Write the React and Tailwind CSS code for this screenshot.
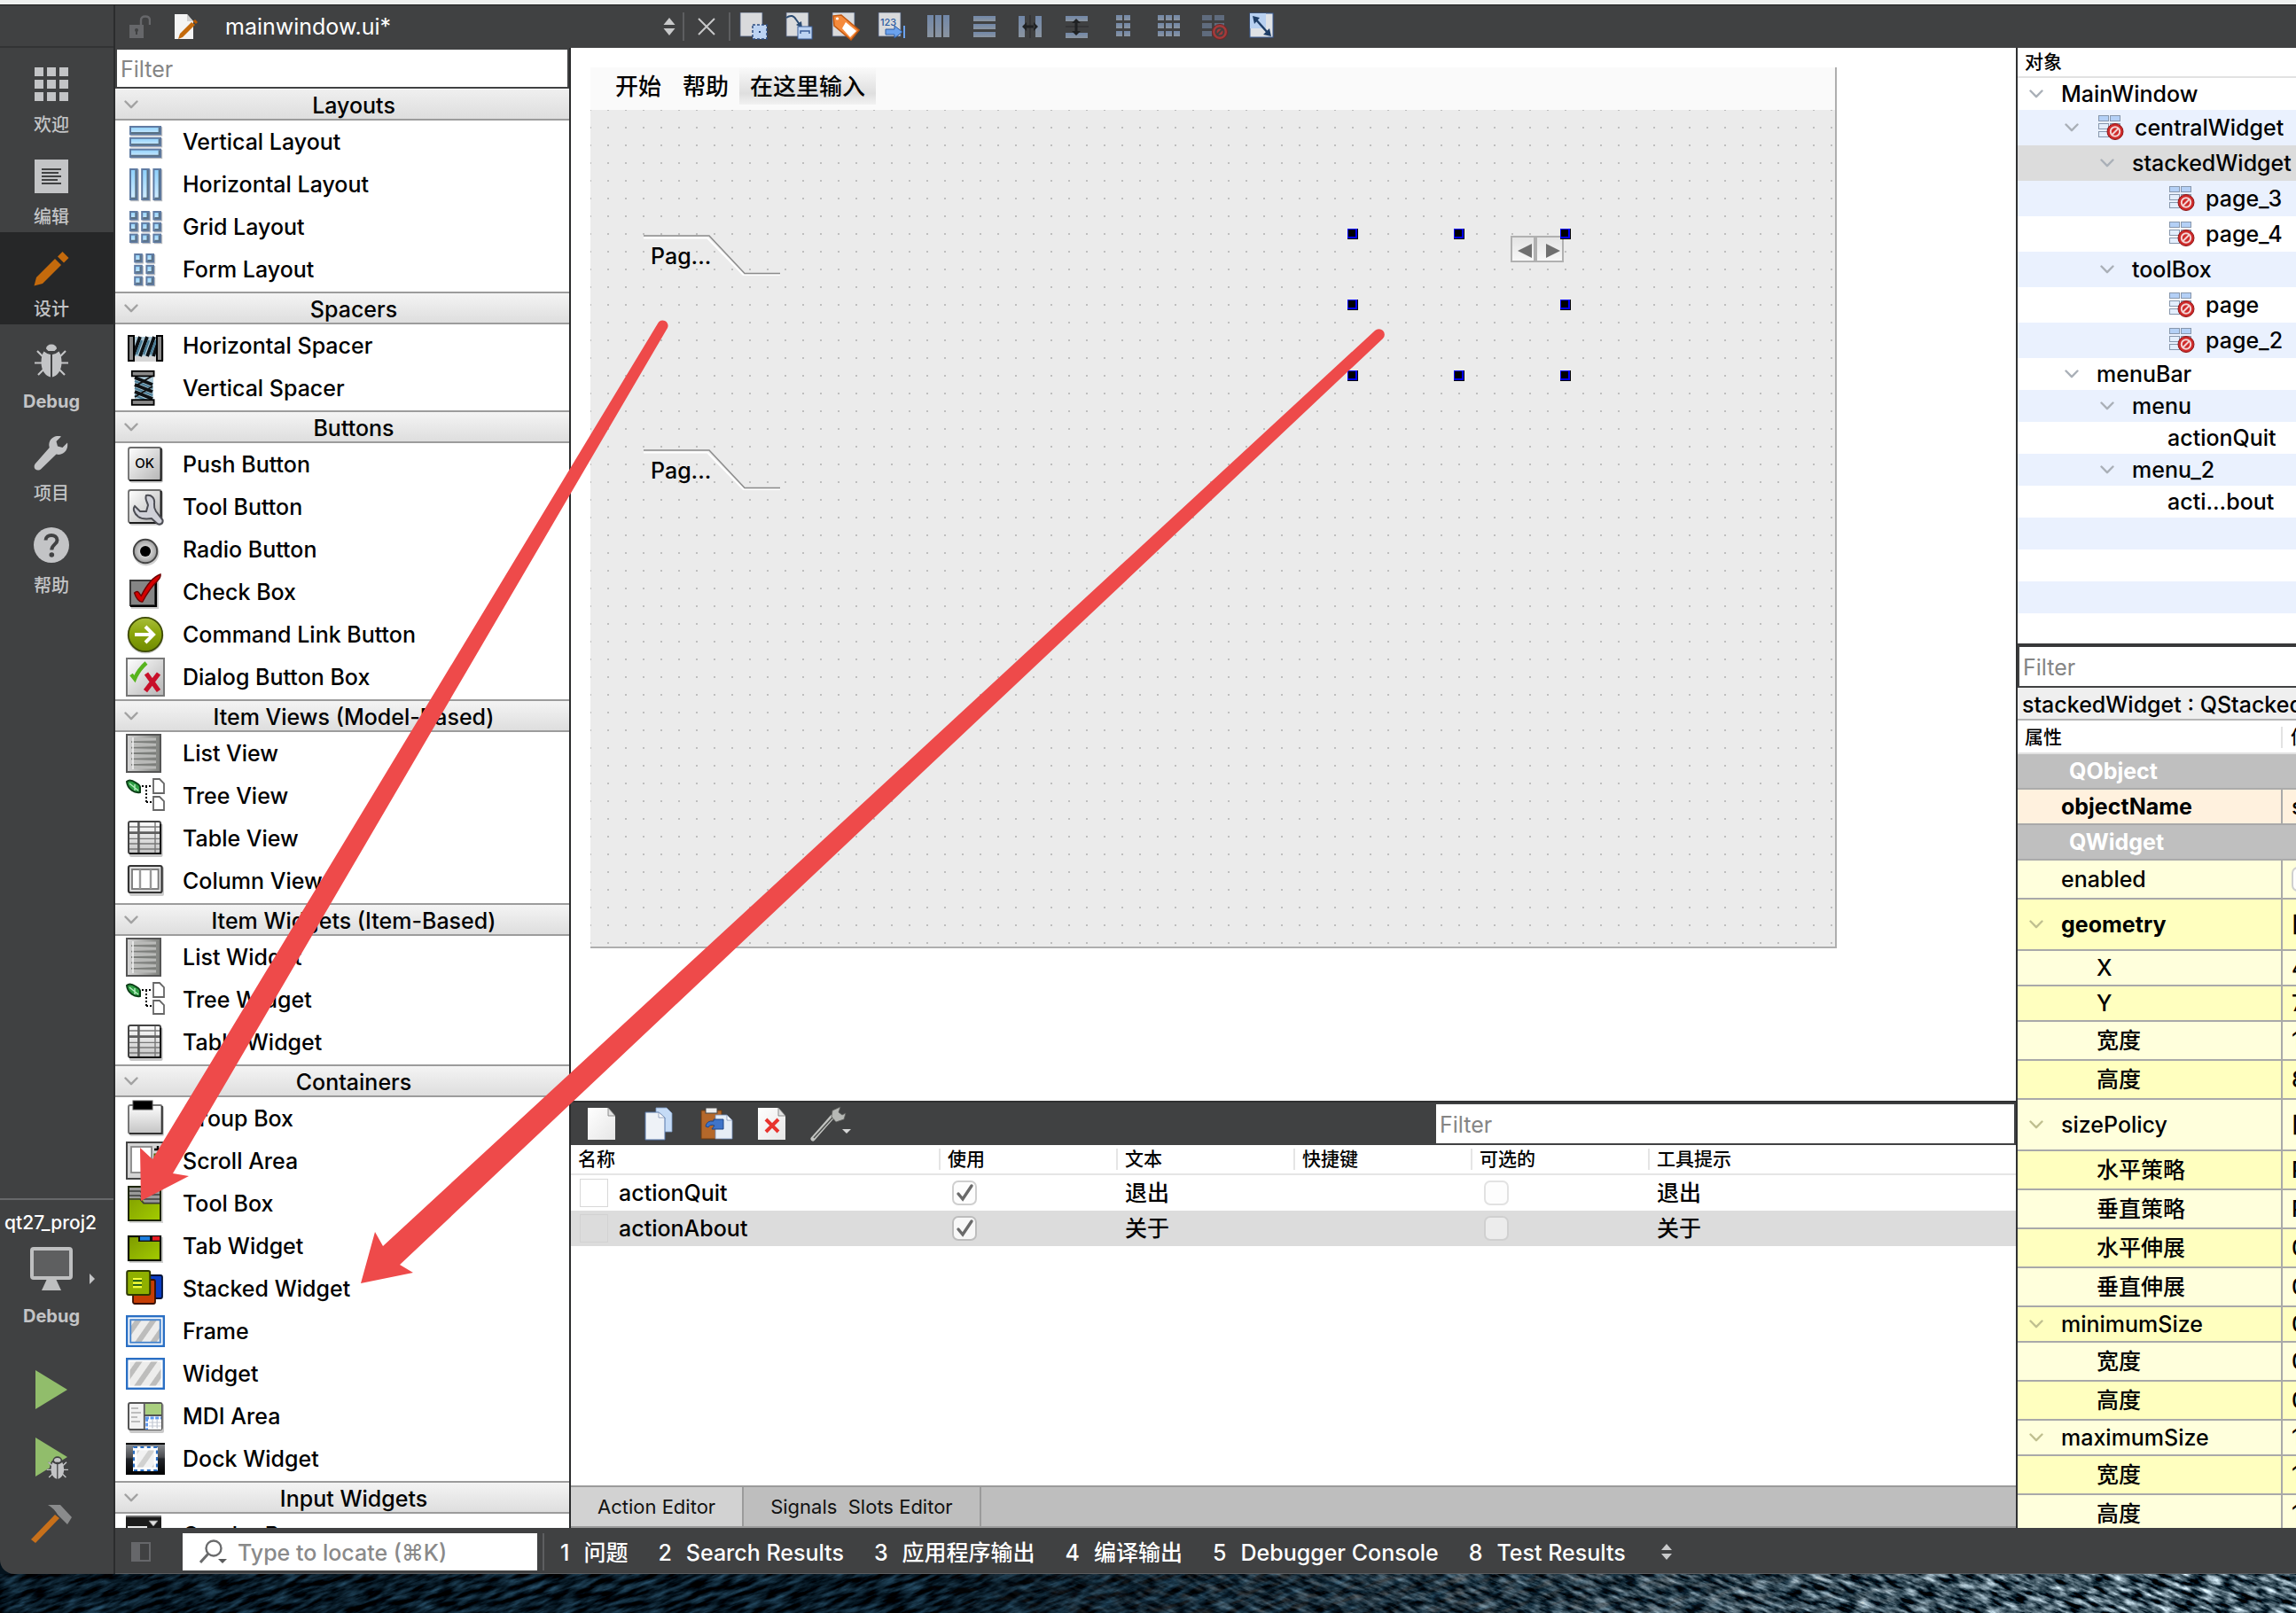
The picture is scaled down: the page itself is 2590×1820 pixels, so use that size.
import React from "react";

/* ---------- shared gradients ---------- */
function Defs() {
  return (
    <svg width="0" height="0" className="absolute" aria-hidden="true">
      <defs>
        <linearGradient id="blueBar" x1="0" y1="0" x2="0" y2="1">
          <stop offset="0" stopColor="#8dd0fb" />
          <stop offset="1" stopColor="#d3edff" />
        </linearGradient>
        <linearGradient id="greyBtn" x1="0" y1="0" x2="1" y2="1">
          <stop offset="0" stopColor="#ffffff" />
          <stop offset="1" stopColor="#b4b4b4" />
        </linearGradient>
        <linearGradient id="greyDown" x1="0" y1="0" x2="0" y2="1">
          <stop offset="0" stopColor="#fdfdfd" />
          <stop offset="1" stopColor="#c4c4c4" />
        </linearGradient>
        <linearGradient id="listGrey" x1="0" y1="0" x2="1" y2="0">
          <stop offset="0" stopColor="#d8d8d8" />
          <stop offset="1" stopColor="#7d7f7b" />
        </linearGradient>
        <linearGradient id="olive" x1="0" y1="0" x2="1" y2="1">
          <stop offset="0" stopColor="#7d9a00" />
          <stop offset="1" stopColor="#a3cc00" />
        </linearGradient>
        <linearGradient id="limeBall" x1="0" y1="0" x2="0" y2="1">
          <stop offset="0" stopColor="#a8bd3a" />
          <stop offset="0.45" stopColor="#8ba60c" />
          <stop offset="1" stopColor="#6f8a00" />
        </linearGradient>
        <linearGradient id="page" x1="0" y1="0" x2="1" y2="1">
          <stop offset="0" stopColor="#ffffff" />
          <stop offset="1" stopColor="#e6e6e6" />
        </linearGradient>
        <linearGradient id="slate" x1="0" y1="0" x2="0" y2="1">
          <stop offset="0" stopColor="#7187a8" />
          <stop offset="1" stopColor="#8b95a1" />
        </linearGradient>
        <linearGradient id="dock" x1="0" y1="0" x2="0" y2="1">
          <stop offset="0" stopColor="#8f9296" />
          <stop offset="0.45" stopColor="#4a4c50" />
          <stop offset="0.5" stopColor="#23262b" />
          <stop offset="1" stopColor="#000000" />
        </linearGradient>
        <radialGradient id="ball">
          <stop offset="0" stopColor="#ffffff" />
          <stop offset="1" stopColor="#9d9d9d" />
        </radialGradient>
        <pattern id="hatch" width="7" height="7" patternUnits="userSpaceOnUse" patternTransform="rotate(35)">
          <rect width="7" height="7" fill="#ededec" />
          <rect width="3" height="7" fill="#bdbdbc" />
        </pattern>
      </defs>
    </svg>
  );
}

const Ico = ({ children }) => (
  <svg viewBox="0 0 22 22" className="size-[44px] shrink-0" aria-hidden="true">
    {children}
  </svg>
);

function Bars({ cells }) {
  return (
    <Ico>
      {cells.map(([x, y, w, h], i) => (
        <g key={i}>
          <rect x={x + 0.6} y={y + 0.6} width={w} height={h} fill="#b9bcc0" />
          <rect x={x + 0.5} y={y + 0.5} width={w - 1} height={h - 1} fill="url(#blueBar)" stroke="#5f7ba3" strokeWidth="1" />
          <path d={`M${x + 1} ${y + h - 1.2}H${x + w - 1.2}V${y + 1}`} fill="none" stroke="#5a7184" strokeWidth="0.9" />
        </g>
      ))}
    </Ico>
  );
}

const gridCells = (xs, ys, w, h) => ys.flatMap((y) => xs.map((x) => [x, y, w, h]));

const IconVLayout = () => <Bars cells={gridCells([2], [2, 8.4, 14.8], 18, 5.2)} />;
const IconHLayout = () => <Bars cells={gridCells([2, 8.6, 15.2], [2], 4.8, 18)} />;
const IconGrid = () => <Bars cells={gridCells([2, 8.6, 15.2], [2, 8.4, 14.8], 4.8, 5.2)} />;
const IconForm = () => <Bars cells={gridCells([4.6, 11.2], [2, 8.4, 14.8], 4.8, 5.2)} />;

const IconHSpacer = () => (
  <Ico>
    <rect x="2" y="7" width="19.500" height="13" rx="1" fill="#d6d6d6" />
    <rect x="3" y="6" width="16" height="11" fill="#aecbd9" />
    <path d="M4 17L8 6M8 17L12 6M12 17L16 6M15.500 17L18.500 8" stroke="#0d1114" strokeWidth="1.900" />
    <path d="M6 16L9 8M10 16L13 8M14 16L17 8" stroke="#4a7c95" strokeWidth="1.200" />
    <rect x="1.500" y="5.500" width="3" height="14" fill="#8a8a8a" stroke="#000" strokeWidth="1" />
    <rect x="17.500" y="5.500" width="3" height="14" fill="#8a8a8a" stroke="#000" strokeWidth="1" />
  </Ico>
);
const IconVSpacer = () => (
  <Ico>
    <rect x="5" y="3" width="10.500" height="16" fill="#aecbd9" />
    <path d="M5 5L15 9M5 9L15 13M5 13L15 17" stroke="#0d1114" strokeWidth="1.900" />
    <path d="M5 7L15 11M5 11L15 15M5 15L14 19" stroke="#4a7c95" strokeWidth="1.200" />
    <path d="M15 4L5 10M15 10L5 16" stroke="#111" strokeWidth="0.9" />
    <rect x="3.4" y="1.4" width="12.4" height="2.8" fill="#8a8a8a" stroke="#000" strokeWidth="0.9" />
    <rect x="3.4" y="17.6" width="12.4" height="2.8" fill="#8a8a8a" stroke="#000" strokeWidth="0.9" />
  </Ico>
);
const BtnBase = () => (
  <>
    <rect x="2" y="2" width="19" height="19.4" rx="1.5" fill="#c9c9c9" />
    <rect x="1.5" y="1.5" width="18.4" height="18.4" rx="1.2" fill="url(#greyBtn)" stroke="#6d6d6d" strokeWidth="0.9" />
    <path d="M2 20H19.8V2" fill="none" stroke="#1c1c1c" strokeWidth="1" />
  </>
);
const IconPush = () => (
  <Ico>
    <BtnBase />
    <text x="10.6" y="13" textAnchor="middle" fontSize="7.5" fontFamily="Inter, sans-serif" fontWeight="500" fill="#000">
      OK
    </text>
  </Ico>
);
const IconToolBtn = () => (
  <Ico>
    <BtnBase />
    <path
      d="M11.500 4.500C14.500 4 16.500 6 16 9.500C15.800 11 16 12 17 13.500L20.800 18.500C21 20.500 19 21.500 17.500 20.200L14.500 17.500C12.500 17.800 9 18 7 16.500C4.500 14.500 3.800 12 5 10.500L8 13.500L11.500 13.500L12.500 10C12 8 10.500 6.500 11.500 4.500Z"
      fill="#cfd0d8"
      stroke="#4c4d54"
      strokeWidth="1"
    />
  </Ico>
);
const IconRadio = () => (
  <Ico>
    <circle cx="11.4" cy="12.8" r="7.4" fill="#d0d0d0" />
    <circle cx="11" cy="12" r="6.6" fill="url(#ball)" stroke="#444" strokeWidth="1" />
    <circle cx="11" cy="12" r="3" fill="#000" />
  </Ico>
);
const IconCheck = () => (
  <Ico>
    <rect x="3" y="5" width="15.500" height="15.500" fill="#cfcfcf" />
    <rect x="2.500" y="4.500" width="14" height="14" fill="#858585" stroke="#3a3a3a" strokeWidth="1" />
    <path d="M2.500 19H17V5" fill="none" stroke="#000" strokeWidth="1.100" />
    <path d="M4.800 11.500C7 9.500 7.500 12 8.600 13.200C11.500 7.500 15 2.500 19.500 1C19.800 2.500 19 3.500 18 4.500C14 8.500 11.500 12.500 9.400 16.500C7.500 17 5.500 14 4.800 11.500Z" fill="#d40000" stroke="#6e0000" strokeWidth="0.700" />
  </Ico>
);
const IconCommand = () => (
  <Ico>
    <circle cx="11" cy="11.600" r="10.200" fill="#cccccc" />
    <circle cx="11" cy="11" r="9.600" fill="url(#limeBall)" stroke="#3d4a05" strokeWidth="0.900" />
    <path d="M5 11H15M11 6.500L15.500 11L11 15.500" fill="none" stroke="#fff" strokeWidth="2" />
  </Ico>
);
const IconDialog = () => (
  <Ico>
    <rect x="0.500" y="0.500" width="21" height="21" fill="url(#greyBtn)" stroke="#777" strokeWidth="1" />
    <path d="M3 9.500L5 12Q7 7 11.500 3" fill="none" stroke="#57b41d" strokeWidth="2.200" />
    <path d="M11.500 9L18.500 18.800M18.500 9L11 18.800" stroke="#c8102a" strokeWidth="2.600" />
  </Ico>
);
const IconList = () => (
  <Ico>
    <rect x="0.500" y="0.500" width="19" height="21" fill="url(#listGrey)" stroke="#555" strokeWidth="1" />
    <path d="M4.500 3H17M4.500 6.200H17M4.500 9.400H17M4.500 12.600H17M4.500 15.800H17M4.500 19H17" stroke="#b9bab8" strokeWidth="1.400" />
    <path d="M3 4.600H17M3 7.800H17M3 11H17M3 14.200H17M3 17.400H17" stroke="#7b7d7a" strokeWidth="0.900" />
    <path d="M4 2V20" stroke="#efefef" strokeWidth="0.800" />
  </Ico>
);
const IconTree = () => (
  <Ico>
    <path d="M0.500 3C2 1.500 4 2.500 5.500 3.500C7 4.500 8 5 8 6V9C5 9.500 1 7.500 0.500 3Z" fill="#2f9e44" stroke="#0c3d17" strokeWidth="1" />
    <path d="M2 4L7 8M5 4.500V8" stroke="#b6ecc0" strokeWidth="0.700" />
    <path d="M9 5.500H15M11.500 5.500V14.500M11.500 14.500H15" fill="none" stroke="#000" strokeWidth="1" strokeDasharray="1 1" />
    <path d="M15.500 1.500H19L21.500 4V9.500H15.500Z" fill="#fff" stroke="#666" strokeWidth="0.900" />
    <path d="M15.500 11.500H19L21.500 14V19H15.500Z" fill="#fff" stroke="#666" strokeWidth="0.900" />
  </Ico>
);
const IconTable = () => (
  <Ico>
    <rect x="2" y="2.500" width="18.800" height="19" rx="1" fill="#c6c6c6" />
    <rect x="1.500" y="1.500" width="18" height="18" rx="1" fill="url(#greyDown)" stroke="#444" strokeWidth="1" />
    <path d="M2 4.500H19M2 11.200H19M2 14H19M2 17H19M16.500 2V19" stroke="#777" strokeWidth="0.700" />
    <path d="M2 7.800H19M7.200 2V19" stroke="#5e5e5e" strokeWidth="1.300" />
    <path d="M2 19.600H19.600V3" fill="none" stroke="#111" strokeWidth="0.900" />
  </Ico>
);
const IconColumn = () => (
  <Ico>
    <rect x="2" y="3" width="19.500" height="16.500" rx="1" fill="#cdcdcd" />
    <rect x="1.500" y="2.500" width="18.800" height="15" rx="1" fill="#dcdcdc" stroke="#333" strokeWidth="1.100" />
    <rect x="3.500" y="4.500" width="14.800" height="11" fill="#fff" stroke="#777" strokeWidth="0.900" />
    <path d="M8 4.500V15.500M14 4.500V15.500" stroke="#999" strokeWidth="1.200" />
  </Ico>
);
const IconGroup = () => (
  <Ico>
    <rect x="2" y="4" width="19.500" height="17" rx="1" fill="#cfcfcf" />
    <rect x="1.500" y="3.500" width="18.800" height="16" rx="1" fill="url(#greyDown)" stroke="#777" strokeWidth="1" />
    <path d="M2 19.500H20.400V4" fill="none" stroke="#333" strokeWidth="0.900" />
    <rect x="4" y="1" width="11" height="5" fill="#000" stroke="#555" strokeWidth="0.500" />
  </Ico>
);
const IconScroll = () => (
  <Ico>
    <rect x="0.500" y="0.500" width="20.500" height="20.500" fill="#d4d4d4" stroke="#444" strokeWidth="1" />
    <rect x="3" y="3" width="11.500" height="14.500" fill="#fff" stroke="#888" strokeWidth="0.900" />
    <rect x="16" y="7" width="3.500" height="6" fill="#95b900" stroke="#3c4a00" strokeWidth="0.500" />
    <path d="M16 4.500H20M18 2.500V4.500" stroke="#000" strokeWidth="1.200" />
  </Ico>
);
const IconToolBox = () => (
  <Ico>
    <rect x="2" y="2" width="19" height="20" fill="#d5d5d5" />
    <rect x="1.500" y="1.500" width="18" height="19" fill="url(#olive)" stroke="#1e2600" strokeWidth="1" />
    <path d="M2 2H19V10.500H10.500L9 8H2Z" fill="#9a9a9a" />
    <path d="M2 4H8L10 6H19M2 6.500H8L10 8.500H19M2 8.500H8L10 10.800H19" fill="none" stroke="#3c3c3c" strokeWidth="0.800" />
  </Ico>
);
const IconTab = () => (
  <Ico>
    <rect x="2" y="6" width="19" height="14.500" fill="#d0d0d0" />
    <rect x="1.500" y="5.500" width="18" height="13.500" fill="url(#olive)" stroke="#0f1400" strokeWidth="1.100" />
    <path d="M7 5V8.500H20V5Z" fill="#111" />
    <rect x="8" y="5.600" width="5.500" height="2.200" fill="#1c7fe0" />
    <rect x="15" y="5.600" width="4" height="2.200" fill="#ea1c24" />
  </Ico>
);
const IconStacked = () => (
  <Ico>
    <rect x="11" y="3.500" width="9.500" height="13" rx="1" fill="#0a3cc4" stroke="#041236" strokeWidth="0.900" />
    <rect x="4" y="6" width="12.500" height="13.500" rx="1" fill="#c63d05" stroke="#3a0f00" strokeWidth="0.900" />
    <rect x="0.600" y="1" width="13" height="13.500" rx="1" fill="#8fb000" stroke="#2e3900" strokeWidth="1" />
    <path d="M4 5.500H9M4 7.800H9M4 10.100H9" stroke="#f4ff3a" strokeWidth="1.100" />
    <path d="M4 6.600H9M4 8.900H9" stroke="#1c5a1c" strokeWidth="0.900" />
  </Ico>
);
const IconFrame = () => (
  <Ico>
    <rect x="0.600" y="2.600" width="20.800" height="16.800" fill="#fff" stroke="#2a6fc4" strokeWidth="1.200" />
    <rect x="2.600" y="4.600" width="16.800" height="12.800" fill="url(#hatch)" stroke="#4b87ce" strokeWidth="1" />
  </Ico>
);
const IconWidget = () => (
  <Ico>
    <rect x="0.600" y="2.600" width="20.800" height="16.800" fill="#fff" stroke="#2a6fc4" strokeWidth="1.200" />
    <rect x="2.200" y="4.200" width="17.600" height="13.600" fill="url(#hatch)" />
  </Ico>
);
const IconMdi = () => (
  <Ico>
    <rect x="2" y="4" width="19.500" height="16.500" rx="1" fill="#c9c9c9" />
    <rect x="1.500" y="3.500" width="18.800" height="15" rx="1" fill="#f2f2f2" stroke="#555" strokeWidth="1" />
    <path d="M3 6.500H7M3 9H8.500M3 11.500H6.500M3 14H8" stroke="#bdbdbd" strokeWidth="0.900" />
    <rect x="11" y="4" width="9" height="6" fill="#a9cf7f" />
    <rect x="11" y="11" width="9" height="7.500" fill="#fff" />
    <path d="M11 12H20M11.800 12V18.500" stroke="#5d97ee" strokeWidth="1.400" strokeDasharray="2 0.800" />
    <path d="M13 14.500H20M13 16.500H20M15 12.500V18M17.600 12.500V18" stroke="#c2c8d2" strokeWidth="0.600" />
    <path d="M10.400 4V18.500M10.400 10.500H20" stroke="#555" strokeWidth="0.900" />
  </Ico>
);
const IconDock = () => (
  <Ico>
    <rect x="0" y="2" width="22" height="18" fill="url(#dock)" />
    <path d="M0 2.500H22" stroke="#000" strokeWidth="1" />
    <rect x="4" y="4" width="14" height="14" fill="#fff" />
    <rect x="6.200" y="6.200" width="9.600" height="9.600" fill="url(#hatch)" opacity="0.700" />
    <rect x="4.500" y="4.500" width="13" height="13" fill="none" stroke="#2a6fc4" strokeWidth="1.100" strokeDasharray="2 1.700" />
  </Ico>
);
const IconCombo = () => (
  <Ico>
    <rect x="0" y="0" width="20" height="20" fill="#1b1b1b" />
    <path d="M0 0.500H20" stroke="#6b6b6b" />
    <rect x="1" y="6" width="11" height="8" fill="#e9e9e9" />
    <path d="M13 3H18L15.500 6Z" fill="#e0e0e0" stroke="#888" strokeWidth="0.400" />
  </Ico>
);

const GROUPS = [
  ["Layouts", [["Vertical Layout", IconVLayout], ["Horizontal Layout", IconHLayout], ["Grid Layout", IconGrid], ["Form Layout", IconForm]]],
  ["Spacers", [["Horizontal Spacer", IconHSpacer], ["Vertical Spacer", IconVSpacer]]],
  ["Buttons", [["Push Button", IconPush], ["Tool Button", IconToolBtn], ["Radio Button", IconRadio], ["Check Box", IconCheck], ["Command Link Button", IconCommand], ["Dialog Button Box", IconDialog]]],
  ["Item Views (Model-Based)", [["List View", IconList], ["Tree View", IconTree], ["Table View", IconTable], ["Column View", IconColumn]]],
  ["Item Widgets (Item-Based)", [["List Widget", IconList], ["Tree Widget", IconTree], ["Table Widget", IconTable]]],
  ["Containers", [["Group Box", IconGroup], ["Scroll Area", IconScroll], ["Tool Box", IconToolBox], ["Tab Widget", IconTab], ["Stacked Widget", IconStacked], ["Frame", IconFrame], ["Widget", IconWidget], ["MDI Area", IconMdi], ["Dock Widget", IconDock]]],
  ["Input Widgets", [["Combo Box", IconCombo]]],
];

const Chevron = ({ className }) => (
  <svg viewBox="0 0 16 10" className={className} aria-hidden="true">
    <path d="M1.500 1.500L8 8.200L14.500 1.500" fill="none" stroke="currentColor" strokeWidth="2.400" strokeLinecap="round" strokeLinejoin="round" />
  </svg>
);

/* ---------- left mode rail ---------- */
const BUG = (
  <g>
    <path d="M14 6.500a6 5 0 0 1 12 0l-2.500 2.500h-7z" />
    <path d="M11.500 9.500q3.500 3 7.500 3.500V38.500C13.500 37.500 8.500 31 8.500 22Q8.500 14 11.500 9.500Z" />
    <path d="M28.500 9.500q-3.500 3-7.500 3.500V38.500C26.500 37.500 31.500 31 31.500 22Q31.500 14 28.500 9.500Z" />
    <path d="M10 15L4 9M30 15l6-6M9.500 22.500H1M30.500 22.500H39M11 30L5 36M29 30l6 6" stroke="currentColor" strokeWidth="2.200" fill="none" />
  </g>
);
const RailIcon = ({ children }) => (
  <svg viewBox="0 0 40 40" className="size-[40px]" fill="currentColor" aria-hidden="true">
    {children}
  </svg>
);
const MODES = [
  ["欢迎", <>{gridCells([1, 15, 29], [1, 15, 29], 10, 10).map(([x, y, w, h], i) => <rect key={i} x={x} y={y} width={w} height={h} />)}</>],
  ["编辑", <><rect x="1" y="1" width="38" height="38" /><path d="M9 12H31M9 16H28M9 20H31M9 24H27M9 28H31" stroke="#404142" strokeWidth="2" /></>],
  ["设计", <g fill="#c46a0c"><path d="M0.500 39.500L3 30L24 9L31 16L10 37Z" /><path d="M27 6.500L32.500 1L39.500 8L34 13.500Z" /></g>],
  ["Debug", BUG],
  ["项目", <path d="M38 8.500l-5.500 5.500-5.500-1.500-1.500-5.500L31 1.500C26 0 20.500 2 18.300 6.500c-1.200 2.500-1.300 5-.5 7.500L2 32c-2 2.500-1.500 5 0 6.500s4.500 1.500 6.500-.5L25.500 21.500c7 2 14-4 12.500-13z" />],
  ["帮助", <><circle cx="20" cy="20" r="20" /><path d="M13.500 14.500C13.500 7 26.500 7 26.500 14.500C26.500 19 20.300 19.500 20.300 25.500" fill="none" stroke="#404142" strokeWidth="4" /><circle cx="20.300" cy="31" r="2.800" fill="#404142" /></>],
];

function Rail() {
  return (
    <nav className="flex w-[130px] shrink-0 flex-col overflow-hidden rounded-bl-[16px] border-r-2 border-[#2b2c2d] bg-[#404142] text-[#c3c4c6]">
      <div className="h-[48px] shrink-0 border-b-2 border-[#323334]" />
      {MODES.map(([label, icon]) => (
        <button
          key={label}
          className={
            label === "设计"
              ? "flex h-[104px] shrink-0 flex-col items-center gap-[14px] bg-[#262728] pt-[21px] pr-[12px] text-xl leading-6 font-bold"
              : "flex h-[104px] shrink-0 flex-col items-center gap-[14px] pt-[21px] pr-[12px] text-xl leading-6 font-bold"
          }
        >
          <RailIcon>{icon}</RailIcon>
          <span className={label === "Debug" ? "font-bold" : "font-medium"}>{label}</span>
        </button>
      ))}
      <div className="mt-auto flex h-[424px] shrink-0 flex-col items-center border-t-2 border-[#67686a] pt-[12px]">
        <span className="h-[28px] pr-[14px] text-[21px] leading-7 text-white">qt27_proj2</span>
        <button className="flex w-full items-center pl-[34px]" aria-label="Select kit">
          <svg viewBox="0 0 48 50" className="mt-[13px] h-[50px] w-[48px]" aria-hidden="true">
            <rect x="2" y="2" width="44" height="33" rx="2" fill="#5e5f60" stroke="#bebfc0" strokeWidth="4" />
            <path d="M19 36H29L35 49H13Z" fill="#bebfc0" />
          </svg>
          <svg viewBox="0 0 6 12" className="mt-[34px] ml-[19px] h-[12px] w-[6px]" fill="#c3c4c6" aria-hidden="true">
            <path d="M0 0L6 6L0 12Z" />
          </svg>
        </button>
        <span className="mt-[16px] pr-[12px] text-xl leading-6 font-bold">Debug</span>
        <button className="mt-[48px] mr-[12px]" aria-label="Run">
          <svg viewBox="0 0 40 46" className="h-[46px] w-[40px]" aria-hidden="true">
            <path d="M2 1L38 23L2 45Z" fill="#91bd6b" />
          </svg>
        </button>
        <button className="mt-[30px] mr-[12px]" aria-label="Start debugging">
          <svg viewBox="3 0 46 48" className="h-[48px] w-[46px]" aria-hidden="true">
            <path d="M8 1L44 23L8 45Z" fill="#91bd6b" />
            <g transform="translate(20 23) scale(0.640)" fill="#404142" stroke="#404142" color="#404142" strokeWidth="5">{BUG}</g>
            <g transform="translate(20 23) scale(0.640)" fill="#c3c4c6" color="#c3c4c6">{BUG}</g>
          </svg>
        </button>
        <button className="mt-[28px] mr-[12px]" aria-label="Build">
          <svg viewBox="0 0 48 46" className="h-[46px] w-[48px]" aria-hidden="true">
            <path d="M28 12L33 16L6 44L1 40Z" fill="#c8701a" />
            <path d="M20 1H34L47 15L42 23L31 12Q27 5 20 1Z" fill="#8a8b8c" />
          </svg>
        </button>
      </div>
    </nav>
  );
}

/* ---------- top toolbar ---------- */
const Sheet = () => <rect x="1" y="0" width="25" height="27" fill="#d9dadc" stroke="#4a5a7c" strokeWidth="0.800" />;
const TOOLS = [
  ["Edit Widgets", <><Sheet /><rect x="15" y="14" width="16" height="16" fill="#bcd3f2" stroke="#2d4c80" strokeWidth="1.500" strokeDasharray="3 2" /><rect x="22" y="21" width="2" height="2" fill="#2d4c80" /></>],
  ["Edit Signals/Slots", <><Sheet /><path d="M1 6Q8 1 12 8L17 15" fill="none" stroke="#2b4b72" strokeWidth="2" /><path d="M19 18L12 14L18 10Z" fill="#2b4b72" /><rect x="14" y="16" width="16" height="14" fill="#bcd3f2" stroke="#3b5f99" /><path d="M17 24V21H27V24" fill="none" stroke="#3b5f99" strokeWidth="1.500" /></>],
  ["Edit Buddies", <><Sheet /><path d="M2 4L11 3L31 20L22 31L3 15Z" fill="#f58a3c" stroke="#c2570f" strokeWidth="1.500" /><path d="M16 11L28 21L21 28L12 18Z" fill="#fff" /><circle cx="6.500" cy="7" r="1.600" fill="#fff" /></>],
  ["Edit Tab Order", <><Sheet /><text x="12" y="15" textAnchor="middle" fontSize="11" fontFamily="Inter, sans-serif" fontWeight="500" fill="#2c5aa0">123</text><path d="M9 19H19V15L28 22L19 29V25H9Z" fill="#6aa2ee" stroke="#2c5aa0" /><path d="M30 15V29" stroke="#6aa2ee" strokeWidth="2" /></>],
  ["Lay Out Horizontally", <g fill="url(#slate)">{[4, 13, 22].map((x) => <rect key={x} x={x} y="3" width="7" height="25" />)}</g>],
  ["Lay Out Vertically", <g fill="url(#slate)">{[4, 13, 22].map((y) => <rect key={y} x="4" y={y} width="25" height="6" />)}</g>],
  ["Lay Out Horizontally in Splitter", <><g fill="url(#slate)"><rect x="3" y="4" width="7" height="24" /><rect x="22" y="4" width="7" height="24" /></g><path d="M16 3V29" stroke="#2a2b2c" /><path d="M7 16L12 11V21ZM25 16L20 11V21ZM11 14.500H21V17.500H11Z" fill="#1f2123" /></>],
  ["Lay Out Vertically in Splitter", <><g fill="url(#slate)"><rect x="4" y="4" width="25" height="6" /><rect x="4" y="23" width="25" height="6" /></g><path d="M4 16H30" stroke="#2a2b2c" /><path d="M16 7L11 12H21ZM16 26L11 21H21ZM14.500 11V21H17.500V11Z" fill="#1f2123" /></>],
  ["Lay Out in a Form", <g fill="url(#slate)">{gridCells([9, 18], [3, 12, 21], 7, 6).map(([x, y, w, h], i) => <rect key={i} x={x} y={y} width={w} height={h} />)}</g>],
  ["Lay Out in a Grid", <g fill="url(#slate)">{gridCells([4, 13, 22], [3, 12, 21], 7, 6).map(([x, y, w, h], i) => <rect key={i} x={x} y={y} width={w} height={h} />)}</g>],
  ["Break Layout", <><g fill="#5f6b7d">{gridCells([2, 16], [3, 12, 21], 11, 6).map(([x, y, w, h], i) => <rect key={i} x={x} y={y} width={w} height={h} />)}</g><circle cx="22" cy="22" r="8.500" fill="#a43a3a" stroke="#6e2526" /><circle cx="22" cy="22" r="4.500" fill="none" stroke="#404142" strokeWidth="2" /><path d="M19 25L25 19" stroke="#404142" strokeWidth="2" /></>],
  ["Adjust Size", <><rect x="4" y="1" width="26" height="27" fill="#dfe2e6" stroke="#3b5f99" /><rect x="4" y="1" width="18" height="17" fill="#b8d0f0" /><path d="M9 6L25 24" stroke="#1e3d66" strokeWidth="2.500" /><path d="M7 4L15 6L9 13ZM28 27L19 25L26 18Z" fill="#1e3d66" /></>],
];

const UpDown = () => (
  <svg viewBox="0 0 14 20" className="h-[20px] w-[14px]" fill="#c8c9ca" aria-hidden="true">
    <path d="M7 0L13.500 8H0.500ZM7 20L0.500 12H13.500Z" />
  </svg>
);

function TopBar() {
  return (
    <header className="flex h-[48px] shrink-0 items-center bg-[#404142] pl-[16px]">
      <svg viewBox="0 0 24 26" className="h-[26px] w-[24px]" aria-label="Unlocked">
        <rect x="0" y="11" width="16" height="15" fill="#66676a" />
        <path d="M13 11V6Q13 1.500 18 1.500T23 6V11" fill="none" stroke="#66676a" strokeWidth="2.400" />
        <circle cx="8" cy="17" r="2" fill="#404142" />
        <path d="M7 18H9V22H7Z" fill="#404142" />
      </svg>
      <svg viewBox="0 0 28 30" className="ml-[26px] h-[30px] w-[28px]" aria-hidden="true">
        <path d="M1 1H15L22 9V29H1Z" fill="#f4f4f4" />
        <path d="M15 1V9H22Z" fill="#cfcfcf" />
        <path d="M5 29L7 23L20 10L24 13L10 27Z" fill="#c46a0c" />
        <path d="M21.500 9L24 7L27 10L25 12Z" fill="#b85a00" />
      </svg>
      <button className="ml-[30px] flex w-[508px] items-center justify-between text-[25px] leading-8 font-normal text-white">
        <span>mainwindow.ui*</span>
        <UpDown />
      </button>
      <div className="ml-[8px] h-[32px] w-[2px] bg-[#5d5e60]" />
      <button className="grid w-[50px] place-items-center" aria-label="Close document">
        <svg viewBox="0 0 20 20" className="size-[20px]" aria-hidden="true">
          <path d="M1 1L19 19M19 1L1 19" stroke="#c8c9ca" strokeWidth="2" />
        </svg>
      </button>
      <div className="h-[32px] w-[2px] bg-[#5d5e60]" />
      {TOOLS.map(([label, icon]) => (
        <button key={label} className="grid h-[40px] w-[52px] place-items-center" aria-label={label}>
          <svg viewBox="0 0 32 32" className="size-[32px]" aria-hidden="true">{icon}</svg>
        </button>
      ))}
    </header>
  );
}

/* ---------- widget box ---------- */
function WidgetBox() {
  return (
    <aside className="flex w-[514px] shrink-0 flex-col overflow-hidden border-r-2 border-[#2b2c2d] bg-white">
      <div className="h-[46px] shrink-0 border-2 border-[#404142]">
        <input aria-label="Filter widgets" placeholder="Filter" className="block h-full w-full bg-white px-[4px] pt-[2px] text-[25px] leading-8 font-normal outline-none placeholder:text-[#858585]" />
      </div>
      {GROUPS.map(([title, items], g) => (
        <section key={title} className="shrink-0">
          <h2 className="border-t border-white">
            <button
              className={
                g === 0
                  ? "flex h-[35px] w-full items-center border-b-2 border-[#9c9c9c] bg-linear-to-b from-[#efefef] to-[#dedede] pl-[10px]"
                  : "flex h-[37px] w-full items-center border-y-2 border-[#9c9c9c] bg-linear-to-b from-[#f4f4f4] to-[#dedede] pl-[10px]"
              }
            >
              <Chevron className="h-[10px] w-[16px] shrink-0 text-[#a2a2a2]" />
              <span className="flex-1 pt-[2px] text-center text-[25px] leading-8">{title}</span>
            </button>
          </h2>
          <ul>
            {items.map(([name, Icon]) => (
              <li key={name}>
                <button className="flex h-[48px] w-full items-center gap-[20px] pl-[12px] text-left text-[25px] leading-8">
                  <Icon />
                  <span>{name}</span>
                </button>
              </li>
            ))}
          </ul>
        </section>
      ))}
    </aside>
  );
}

/* ---------- form editor ---------- */
const HANDLE_SPOTS = [
  "left-[854px] top-[134px]", "left-[974px] top-[134px]", "left-[1094px] top-[134px]",
  "left-[854px] top-[214px]", "left-[1094px] top-[214px]",
  "left-[854px] top-[294px]", "left-[974px] top-[294px]", "left-[1094px] top-[294px]",
];

const PageTab = ({ className }) => (
  <div className={className}>
    <svg viewBox="0 0 156 46" className="absolute inset-0 h-[46px] w-[156px]" fill="none" aria-hidden="true">
      <path d="M0 3.500H72L113 45.500H154" stroke="#fff" strokeWidth="2" />
      <path d="M0 1H74L114 43.500H154" stroke="#8c8c8c" strokeWidth="1.500" />
    </svg>
    <span className="relative block pt-[8px] pl-[8px] text-[25px] leading-8">Pag...</span>
  </div>
);

function FormEditor() {
  return (
    <section className="min-h-0 flex-1 overflow-hidden bg-white pt-[22px] pl-[22px]">
      <div className="flex h-[994px] w-[1406px] flex-col border-r-2 border-b-2 border-[#aeaeae] bg-[#ebebeb]">
        <div className="flex h-[48px] items-start bg-[#fafafa] pl-[16px] text-[26px] font-medium">
          <button className="h-[42px] px-[12px]">开始</button>
          <button className="h-[42px] px-[12px]">帮助</button>
          <button className="h-[42px] bg-linear-to-b from-[#fafafa] via-[#dfdfdf] via-70% to-[#f2f2f2] px-[12px]">在这里输入</button>
        </div>
        <div className="relative flex-1 bg-[#ebebeb] bg-[conic-gradient(from_270deg_at_2px_2px,#bebebe_90deg,transparent_0)] bg-[length:20px_20px] bg-[position:-1px_-1px]">
          <PageTab className="absolute top-[141px] left-[60px] h-[46px] w-[156px]" />
          <PageTab className="absolute top-[383px] left-[60px] h-[46px] w-[156px]" />
          <div className="absolute top-[142px] left-[1038px] flex h-[30px] w-[60px]">
            <button className="grid flex-1 place-items-center border-2 border-[#b0b0b0] bg-linear-to-b from-[#e4e4e4] to-[#f8f8f8] pt-[4px] pl-[4px]" aria-label="Previous page">
              <svg viewBox="0 0 16 16" className="size-[16px]" fill="#707070" aria-hidden="true"><path d="M16 0V16L0 8Z" /></svg>
            </button>
            <button className="grid flex-1 place-items-center border-2 border-[#b0b0b0] bg-linear-to-b from-[#e4e4e4] to-[#f8f8f8] pt-[4px] pl-[8px]" aria-label="Next page">
              <svg viewBox="0 0 16 16" className="size-[16px]" fill="#707070" aria-hidden="true"><path d="M0 0V16L16 8Z" /></svg>
            </button>
          </div>
          {HANDLE_SPOTS.map((spot) => (
            <span key={spot} className={`absolute size-[12px] border-r border-b border-black bg-[#0000ff] p-px ${spot}`}>
              <span className="block size-[8px] bg-black" />
            </span>
          ))}
        </div>
      </div>
    </section>
  );
}

/* ---------- action editor ---------- */
function Check({ label, checked, muted }) {
  return (
    <span className="grid w-[28px]">
      <input
        type="checkbox"
        aria-label={label}
        defaultChecked={checked}
        className={
          muted
            ? "col-start-1 row-start-1 size-[28px] appearance-none rounded-[7px] border-2 border-[#d0d0d0] bg-[#ececec] checked:border-[#bdbdbd] checked:bg-[#f8f8f8]"
            : "col-start-1 row-start-1 size-[28px] appearance-none rounded-[7px] border-2 border-[#e2e2e2] bg-[#fdfdfd] checked:border-[#cfcfcf]"
        }
      />
      {checked && (
        <svg viewBox="0 0 28 28" className="pointer-events-none col-start-1 row-start-1 size-[28px]" aria-hidden="true">
          <path d="M7 15L12 21L22 6" fill="none" stroke="#6a6a6a" strokeWidth="3.400" strokeLinecap="round" />
        </svg>
      )}
    </span>
  );
}

const ACTIONS = [
  ["actionQuit", "退出"],
  ["actionAbout", "关于"],
];
const HEADS = ["使用", "文本", "快捷键", "可选的", "工具提示"];

const PageSvg = () => <><path d="M1 0H24L32 9V36H1Z" fill="url(#page)" /><path d="M24 0V9H32Z" fill="#e2e2e2" stroke="#777" strokeWidth="0.800" /></>;

function ActionEditor() {
  return (
    <section className="flex h-[482px] shrink-0 flex-col bg-white">
      <div className="flex h-[50px] shrink-0 items-center border-t-2 border-[#303132] bg-[#404142] pl-[18px]">
        <button className="mr-[30px]" aria-label="New action">
          <svg viewBox="0 0 34 36" className="h-[36px] w-[34px]" aria-hidden="true"><PageSvg /></svg>
        </button>
        <button className="mr-[28px]" aria-label="Copy">
          <svg viewBox="0 0 36 38" className="h-[38px] w-[36px]" aria-hidden="true">
            <path d="M14 1H26L32 7V28H14Z" fill="#c5dbf6" stroke="#7f9cc6" strokeWidth="0.800" />
            <path d="M2 6H17L24 12V37H2Z" fill="#eef2f7" stroke="#5577aa" strokeWidth="1" />
            <path d="M17 6V12H24Z" fill="#fff" stroke="#7d93b5" strokeWidth="0.800" />
          </svg>
        </button>
        <button className="mr-[26px]" aria-label="Paste">
          <svg viewBox="0 0 38 38" className="size-[38px]" aria-hidden="true">
            <path d="M1 4H24V36L1 36Z" fill="#b5682a" stroke="#6b3a10" />
            <rect x="6" y="1" width="13" height="6" fill="#ececec" stroke="#444" />
            <path d="M17 9H30L36 15V36H17Z" fill="#e6edf6" stroke="#6e8bb8" strokeWidth="0.800" />
            <path d="M30 9V15H36Z" fill="#fff" stroke="#7d93b5" strokeWidth="0.800" />
            <path d="M6 22Q7 15 15 16L15 14H26V25H13L16 21Q11 19 9 23Z" fill="#3f74c9" stroke="#1f4788" />
          </svg>
        </button>
        <button className="mr-[26px]" aria-label="Delete">
          <svg viewBox="0 0 34 36" className="h-[36px] w-[34px]" aria-hidden="true">
            <PageSvg />
            <path d="M10 13L24 27M24 13L10 27" stroke="#e8332e" strokeWidth="4" />
          </svg>
        </button>
        <button aria-label="Configure">
          <svg viewBox="0 0 46 40" className="h-[40px] w-[46px]" aria-hidden="true">
            <path d="M3 37L25 12" stroke="#c2c4c1" strokeWidth="5" strokeLinecap="round" />
            <path d="M4 36L25 13" stroke="#4d4f4d" strokeWidth="1.500" />
            <path d="M25 5L34 1L32 7L36 10L40 8L38 15L29 18L24 12Z" fill="#b6b8b5" stroke="#5c5d5b" strokeWidth="0.800" />
            <path d="M36 26H46L41 31Z" fill="#d5d6d6" />
          </svg>
        </button>
        <div className="ml-auto h-full w-[654px] border-2 border-l-0 border-[#404142]">
          <input aria-label="Filter actions" placeholder="Filter" className="block h-full w-full bg-white px-[4px] pt-[2px] text-[25px] leading-8 font-normal outline-none placeholder:text-[#858585]" />
        </div>
      </div>
      <table className="w-full table-fixed border-separate border-spacing-0 text-left">
        <colgroup>
          <col className="w-[415px]" />
          <col className="w-[200px]" />
          <col className="w-[200px]" />
          <col className="w-[200px]" />
          <col className="w-[200px]" />
          <col />
        </colgroup>
        <thead>
          <tr className="h-[34px] text-[21px] leading-6">
            <th className="border-b-2 border-[#e5e5e5] p-0 pl-[8px] font-medium">名称</th>
            {HEADS.map((h) => (
              <th key={h} className="border-b-2 border-[#e5e5e5] p-0 font-medium">
                <span className="block border-l-2 border-[#e5e5e5] pl-[8px]">{h}</span>
              </th>
            ))}
          </tr>
        </thead>
        <tbody className="text-[25px] leading-8">
          {ACTIONS.map(([name, text], i) => (
            <tr key={name} className={i ? "h-[40px] bg-[#dcdcdc]" : "h-[40px] bg-white"}>
              <td className="p-0">
                <div className="flex items-center gap-[12px] pl-[10px]">
                  <span className={i ? "size-[32px] border border-[#d2d2d2]" : "size-[32px] border border-[#d8d8d8]"} />
                  {name}
                </div>
              </td>
              <td className="p-0 pl-[15px]"><Check label={`${name} 使用`} checked muted={i === 1} /></td>
              <td className="p-0 pl-[10px]">{text}</td>
              <td className="p-0" />
              <td className="p-0 pl-[15px]"><Check label={`${name} 可选的`} muted={i === 1} /></td>
              <td className="p-0 pl-[10px]">{text}</td>
            </tr>
          ))}
        </tbody>
      </table>
      <div className="mt-auto flex h-[48px] shrink-0 border-y-2 border-[#9b9b9b] bg-[#bebebe] text-[22px] font-normal text-[#111]">
        <button className="border-r-2 border-[#9b9b9b] bg-[#d2d2d2] px-[30px]">Action Editor</button>
        <button className="border-r-2 border-[#9b9b9b] px-[30px] whitespace-pre">Signals  Slots Editor</button>
      </div>
    </section>
  );
}

/* ---------- right dock ---------- */
const BreakIcon = () => (
  <svg viewBox="0 0 30 30" className="size-[30px] shrink-0" aria-hidden="true">
    {gridCells([1, 14], [1, 10, 19], 12, 7).map(([x, y, w, h], i) => (
      <rect key={i} x={x + 0.500} y={y + 0.500} width={w - 1} height={h - 1} fill={y < 5 ? "#b4d0f6" : "#e3eefc"} stroke="#8797ad" strokeWidth="1" />
    ))}
    <circle cx="20" cy="19.500" r="9" fill="#cf2a2a" stroke="#8d1616" />
    <circle cx="20" cy="19.500" r="5.200" fill="none" stroke="#f3d4d4" strokeWidth="2" />
    <path d="M16.500 23L23.500 16" stroke="#f3d4d4" strokeWidth="2" />
  </svg>
);

const TREE = [
  ["MainWindow", 0, true, false, "h-[36px] bg-white"],
  ["centralWidget", 1, true, true, "h-[40px] bg-[#eaf1fe]"],
  ["stackedWidget", 2, true, false, "h-[40px] bg-[#dcdcdc]"],
  ["page_3", 3, false, true, "h-[40px] bg-[#eaf1fe]"],
  ["page_4", 3, false, true, "h-[40px] bg-white"],
  ["toolBox", 2, true, false, "h-[40px] bg-[#eaf1fe]"],
  ["page", 3, false, true, "h-[40px] bg-white"],
  ["page_2", 3, false, true, "h-[40px] bg-[#eaf1fe]"],
  ["menuBar", 1, true, false, "h-[36px] bg-white"],
  ["menu", 2, true, false, "h-[36px] bg-[#eaf1fe]"],
  ["actionQuit", 3, false, false, "h-[36px] bg-white"],
  ["menu_2", 2, true, false, "h-[36px] bg-[#eaf1fe]"],
  ["acti...bout", 3, false, false, "h-[36px] bg-white"],
];
const INDENT = ["pl-0", "pl-[40px]", "pl-[80px]", "pl-[120px]"];

/* name, value, kind, row style */
const PROPS = [
  ["QObject", null, "group", "h-[40px] bg-[#bfbfbf]"],
  ["objectName", "stackedWidget", "bold", "h-[40px] bg-[#fff1de]"],
  ["QWidget", null, "group", "h-[40px] bg-[#bfbfbf]"],
  ["enabled", <Check label="enabled" checked />, "top", "h-[44px] bg-[#ffffdc]"],
  ["geometry", "[(430, 70), 120 x 80]", "boldBranch", "h-[58px] bg-[#ffffbf]"],
  ["X", "430", "leaf", "h-[40px] bg-[#ffffdc]"],
  ["Y", "70", "leaf", "h-[40px] bg-[#ffffbf]"],
  ["宽度", "120", "leaf", "h-[44px] bg-[#ffffdc]"],
  ["高度", "80", "leaf", "h-[44px] bg-[#ffffbf]"],
  ["sizePolicy", "[Preferred, Preferred, 0, 0]", "branch", "h-[58px] bg-[#ffffdc]"],
  ["水平策略", "Preferred", "leaf", "h-[44px] bg-[#ffffbf]"],
  ["垂直策略", "Preferred", "leaf", "h-[44px] bg-[#ffffdc]"],
  ["水平伸展", "0", "leaf", "h-[44px] bg-[#ffffbf]"],
  ["垂直伸展", "0", "leaf", "h-[44px] bg-[#ffffdc]"],
  ["minimumSize", "0 x 0", "branch", "h-[40px] bg-[#ffffbf]"],
  ["宽度", "0", "leaf", "h-[44px] bg-[#ffffdc]"],
  ["高度", "0", "leaf", "h-[44px] bg-[#ffffbf]"],
  ["maximumSize", "16777215 x 16777215", "branch", "h-[40px] bg-[#ffffdc]"],
  ["宽度", "16777215", "leaf", "h-[44px] bg-[#ffffbf]"],
  ["高度", "16777215", "leaf", "h-[44px] bg-[#ffffdc]"],
];

function RightDock() {
  return (
    <aside className="flex w-[316px] shrink-0 flex-col overflow-hidden border-l-2 border-[#2f3031] bg-white text-[25px] leading-8">
      <div className="flex h-[34px] shrink-0 items-center border-b-2 border-[#e2e2e2] pl-[8px] text-[21px]">对象</div>
      <ul className="shrink-0">
        {TREE.map(([name, level, open, icon, row]) => (
          <li key={name} className={row}>
            <button className={`flex h-full items-center whitespace-nowrap ${INDENT[level]}`}>
              <span className="grid w-[42px] shrink-0 place-items-center">
                {open && <Chevron className="h-[10px] w-[16px] text-[#aab0b8]" />}
              </span>
              {icon ? <span className="w-[50px] shrink-0 pl-[8px]"><BreakIcon /></span> : <span className="w-[7px] shrink-0" />}
              <span>{name}</span>
            </button>
          </li>
        ))}
        <li className="h-[36px] bg-[#eaf1fe]" />
        <li className="h-[36px] bg-white" />
        <li className="h-[36px] bg-[#eaf1fe]" />
      </ul>
      <div className="mt-[34px] h-[50px] shrink-0 border-2 border-t-4 border-r-0 border-[#404142] border-t-[#38393a]">
        <input aria-label="Filter properties" placeholder="Filter" className="block h-full w-full bg-white px-[4px] pt-[2px] text-[25px] leading-8 font-normal outline-none placeholder:text-[#858585]" />
      </div>
      <div className="h-[37px] shrink-0 overflow-hidden border-b-2 border-[#b5b5b5] bg-[#efefef] pt-[3px] pl-[5px] whitespace-nowrap">stackedWidget : QStackedWidget</div>
      <table className="mt-[2px] w-full table-fixed border-separate border-spacing-0 text-left">
        <colgroup>
          <col className="w-[297px]" />
          <col />
        </colgroup>
        <thead>
          <tr className="h-[36px] text-[21px] leading-6">
            <th className="border-b-2 border-[#e2e2e2] p-0 pl-[8px] font-medium">属性</th>
            <th className="overflow-hidden border-b-2 border-[#e2e2e2] p-0 font-medium">
              <span className="block border-l-2 border-[#e2e2e2] pl-[9px] whitespace-nowrap">值</span>
            </th>
          </tr>
        </thead>
        <tbody>
          {PROPS.map(([name, value, kind, row], i) =>
            kind === "group" ? (
              <tr key={i} className={row}>
                <th colSpan={2} className="border-b-2 border-[#ababab] p-0 pl-[58px] font-bold text-white">{name}</th>
              </tr>
            ) : (
              <tr key={i} className={row}>
                <td className="border-b-2 border-[#a9a9a9] p-0">
                  <div className="flex items-center">
                    <span className="grid w-[42px] shrink-0 place-items-center">
                      {(kind === "branch" || kind === "boldBranch") && <Chevron className="h-[10px] w-[16px] text-[#c0c090]" />}
                    </span>
                    <span className={kind === "leaf" ? "pl-[47px]" : kind === "bold" || kind === "boldBranch" ? "pl-[7px] font-bold" : "pl-[7px]"}>{name}</span>
                  </div>
                </td>
                <td className="overflow-hidden border-b-2 border-l-2 border-[#a9a9a9] p-0 pl-[10px] whitespace-nowrap">{value}</td>
              </tr>
            )
          )}
        </tbody>
      </table>
    </aside>
  );
}

/* ---------- status bar ---------- */
const PANES = [["1", "问题"], ["2", "Search Results"], ["3", "应用程序输出"], ["4", "编译输出"], ["5", "Debugger Console"], ["8", "Test Results"]];

function StatusBar() {
  return (
    <footer className="flex h-[52px] shrink-0 items-center border-b border-[#5b5c5e] bg-[#404142] pt-[2px] pl-[18px] text-[25px] leading-8 text-white">
      <button aria-label="Toggle sidebar">
        <svg viewBox="0 0 22 22" className="size-[22px]" aria-hidden="true">
          <rect x="1" y="1" width="20" height="20" fill="#404142" stroke="#66676a" strokeWidth="2" />
          <rect x="1" y="1" width="9" height="20" fill="#66676a" />
        </svg>
      </button>
      <label className="ml-[36px] flex h-[42px] w-[400px] items-center bg-white pl-[19px]">
        <svg viewBox="0 0 32 28" className="h-[28px] w-[32px] shrink-0" aria-hidden="true">
          <circle cx="16" cy="10" r="8.500" fill="none" stroke="#6a6b6c" strokeWidth="2.400" />
          <path d="M10 16L1 26" stroke="#6a6b6c" strokeWidth="3" />
          <path d="M21 22H31L26 27Z" fill="#5a5b5c" />
        </svg>
        <input aria-label="Locate" placeholder="Type to locate (⌘K)" className="ml-[11px] w-full min-w-0 flex-1 pt-[2px] outline-none placeholder:text-[#8a8a8a]" />
      </label>
      <div className="ml-[6px] h-[42px] w-[2px] bg-[#5d5e60]" />
      <div className="flex items-center gap-[34px] pt-[2px] pl-[18px]">
        {PANES.map(([n, label]) => (
          <button key={n} className="flex gap-[16px]">
            <span>{n}</span>
            <span>{label}</span>
          </button>
        ))}
      </div>
      <button className="ml-[40px]" aria-label="More output panes">
        <svg viewBox="0 0 12 18" className="h-[18px] w-[12px]" fill="#c8c9ca" aria-hidden="true">
          <path d="M6 0L12 7H0ZM6 18L0 11H12Z" />
        </svg>
      </button>
    </footer>
  );
}

const Arrows = () => (
  <svg viewBox="0 0 1600 1500" className="pointer-events-none absolute top-0 left-0 h-[1500px] w-[1600px]" fill="#ee4a4a" aria-hidden="true">
    <path d="M742 365A5.500 5.500 0 0 1 753 370L195 1324L213 1327L159 1355L158 1295L172 1308Z" />
    <path d="M1551 373A5.500 5.500 0 0 1 1560 382L451 1427L466 1436L407 1448L423 1390L432 1406Z" />
  </svg>
);

const Sea = () => (
  <div className="h-[44px] shrink-0 overflow-hidden bg-[#04131d]">
    <svg className="h-full w-full" aria-hidden="true">
      <defs>
        <filter id="waves" x="0" y="0" width="100%" height="100%" colorInterpolationFilters="sRGB">
          <feTurbulence type="fractalNoise" baseFrequency="0.040 0.180" numOctaves="4" seed="7" />
          <feColorMatrix values="0.350 0 0 0 -0.150  0.600 0 0 0 -0.210  0.750 0 0 0 -0.240  0 0 0 0 1" />
        </filter>
        <filter id="foam" x="0" y="0" width="100%" height="100%" colorInterpolationFilters="sRGB">
          <feTurbulence type="fractalNoise" baseFrequency="0.050 0.200" numOctaves="5" seed="3" />
          <feColorMatrix values="1.900 0 0 0 -0.700  1.900 0 0 0 -0.610  1.900 0 0 0 -0.560  0 0 0 0 1" />
        </filter>
        <linearGradient id="fade">
          <stop offset="0.400" stopColor="#000" />
          <stop offset="0.900" stopColor="#fff" />
        </linearGradient>
        <mask id="foamMask">
          <rect width="100%" height="100%" fill="url(#fade)" />
        </mask>
      </defs>
      <g transform="rotate(-20)">
        <rect x="-100" y="-20" width="2900" height="1050" filter="url(#waves)" />
      </g>
      <g mask="url(#foamMask)">
        <g transform="rotate(20)">
          <rect x="-100" y="-1000" width="2900" height="1150" filter="url(#foam)" />
        </g>
      </g>
    </svg>
  </div>
);

export default function App() {
  return (
    <div className="relative flex h-screen flex-col overflow-hidden bg-[#04131d] font-['Inter','Noto_Sans_CJK_SC',sans-serif] font-medium text-black">
      <Defs />
      <div className="h-[6px] shrink-0 border-b border-[#1c1c1c] bg-[#eef0ef]" />
      <div className="flex min-h-0 flex-1">
        <Rail />
        <div className="flex min-w-0 flex-1 flex-col">
          <TopBar />
          <main className="flex min-h-0 flex-1">
            <WidgetBox />
            <div className="flex min-w-0 flex-1 flex-col">
              <FormEditor />
              <ActionEditor />
            </div>
            <RightDock />
          </main>
          <StatusBar />
        </div>
      </div>
      <Sea />
      <Arrows />
    </div>
  );
}
